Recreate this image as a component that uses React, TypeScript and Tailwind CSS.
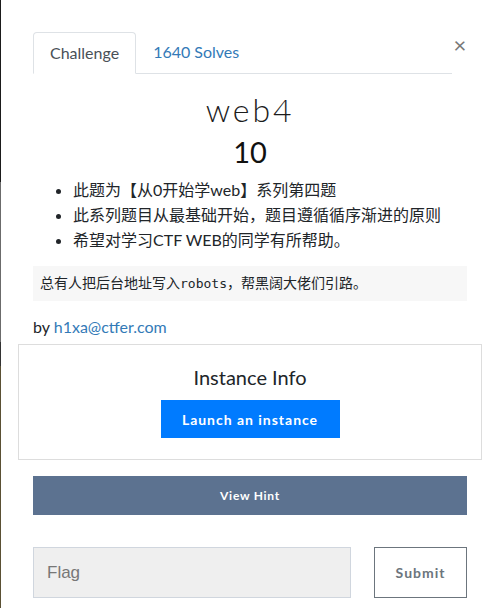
import React from 'react';

const App: React.FC = () => {
  return (
    <div className="flex min-h-[608px] w-full bg-white font-['Lato','Noto_Sans_CJK_SC',sans-serif] text-[#212529]">
      {/* backdrop edge peeking out at the left */}
      <div className="flex w-px flex-col">
        <div className="h-[182px] bg-[#1b1b1b]"></div>
        <div className="h-[160px] bg-[#6b6b6b]"></div>
        <div className="h-[24px] bg-[#333]"></div>
        <div className="flex-1 bg-[#5a5034]"></div>
      </div>

      <div className="flex-1 px-[32px] pt-[32px]">
        {/* Tabs */}
        <div className="flex items-start">
          <nav className="flex flex-1 border-b border-[#dee2e6]">
            <div className="-mb-px rounded-t-[4px] border border-[#dee2e6] border-b-white bg-white px-[16px] pb-[11px] pt-[10px] text-[16px] leading-[19px] text-[#495057]">
              Challenge
            </div>
            <div className="px-[17px] pb-[11px] pt-[10px] text-[16px] leading-[19px] text-[#337ab7]">
              1640 Solves
            </div>
          </nav>
          <button className="ml-[1px] mt-[2px] w-[14px] text-[22px] leading-[22px] text-[#777]">×</button>
        </div>

        {/* Title */}
        <div className="text-center">
          <h2 className="mt-[18px] text-[32px] font-light leading-[36px] tracking-[0.09em] text-[#1c1c1c]">web4</h2>
          <h3 className="mt-[6px] text-[29px] leading-[36px] text-[#111]">10</h3>
        </div>

        {/* Description */}
        <ul className="mt-[7px] list-disc pl-[40px] text-[16px] leading-[25px] text-[#212529]">
          <li>此题为【从0开始学web】系列第四题</li>
          <li>此系列题目从最基础开始，题目遵循循序渐进的原则</li>
          <li>希望对学习CTF WEB的同学有所帮助。</li>
        </ul>

        <div className="mt-[14px] bg-[#f7f7f7] px-[7px] py-[8px] text-[14px] leading-[18px] text-[#212529]">
          总有人把后台地址写入<span className="font-['DejaVu_Sans_Mono',monospace] text-[13px]">robots</span>，帮黑阔大佬们引路。
        </div>

        <p className="mt-[16px] text-[16px] leading-[20px]">
          by <a className="text-[#337ab7]">h1xa@ctfer.com</a>
        </p>

        {/* Instance */}
        <div className="mx-[-15px] mt-[7px] flex flex-col items-center border border-[#dddddd] pb-[21px] pt-[18px]">
          <div className="text-[20px] leading-[28px] text-[#212529]">Instance Info</div>
          <button className="mt-[9px] h-[38px] w-[179px] bg-[#007bff] text-[14px] font-bold tracking-[0.07em] text-white">
            Launch an instance
          </button>
        </div>

        {/* Hint */}
        <button className="mt-[16px] h-[39px] w-full bg-[#5c7290] text-[12px] font-bold tracking-[0.06em] text-white">
          View Hint
        </button>

        {/* Flag form */}
        <div className="mt-[32px] flex gap-[23px]">
          <input
            placeholder="Flag"
            className="h-[51px] flex-1 border border-[#d0d6de] bg-[#efefef] px-[13px] font-['Liberation_Sans',sans-serif] text-[17px] text-[#555] placeholder:text-[#777] outline-none"
          />
          <button className="h-[51px] w-[93px] border border-[#6c757d] bg-white text-[14px] font-bold tracking-[0.07em] text-[#6c757d]">
            Submit
          </button>
        </div>
      </div>
    </div>
  );
};

export default App;
